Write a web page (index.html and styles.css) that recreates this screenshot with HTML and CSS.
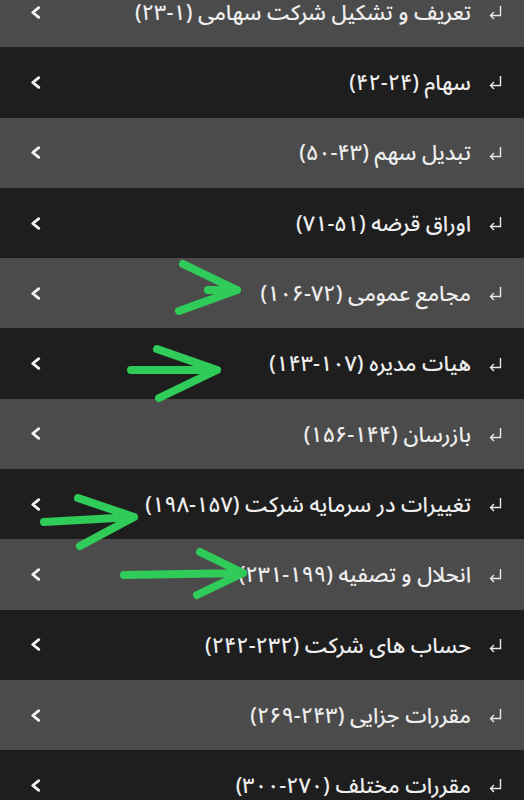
FILE: index.html
```html
<!DOCTYPE html>
<html lang="fa" dir="rtl">
<head>
<meta charset="utf-8">
<title>فهرست</title>
<link rel="stylesheet" href="styles.css">
</head>
<body>
<div class="screen">
  <ul class="list">
    <li class="row light"><svg class="ret" viewBox="0 0 14 16"><path d="M12.5 1v9.5H2.5M6 7l-3.5 3.5L6 14"/></svg><span class="label">تعریف و تشکیل شرکت سهامی (۱-۲۳)</span><svg class="chev" viewBox="0 0 10 12"><path d="M8 1.5L2.5 6L8 10.5"/></svg></li>
    <li class="row dark"><svg class="ret" viewBox="0 0 14 16"><path d="M12.5 1v9.5H2.5M6 7l-3.5 3.5L6 14"/></svg><span class="label">سهام (۲۴-۴۲)</span><svg class="chev" viewBox="0 0 10 12"><path d="M8 1.5L2.5 6L8 10.5"/></svg></li>
    <li class="row light"><svg class="ret" viewBox="0 0 14 16"><path d="M12.5 1v9.5H2.5M6 7l-3.5 3.5L6 14"/></svg><span class="label">تبدیل سهم (۴۳-۵۰)</span><svg class="chev" viewBox="0 0 10 12"><path d="M8 1.5L2.5 6L8 10.5"/></svg></li>
    <li class="row dark"><svg class="ret" viewBox="0 0 14 16"><path d="M12.5 1v9.5H2.5M6 7l-3.5 3.5L6 14"/></svg><span class="label">اوراق قرضه (۵۱-۷۱)</span><svg class="chev" viewBox="0 0 10 12"><path d="M8 1.5L2.5 6L8 10.5"/></svg></li>
    <li class="row light"><svg class="ret" viewBox="0 0 14 16"><path d="M12.5 1v9.5H2.5M6 7l-3.5 3.5L6 14"/></svg><span class="label">مجامع عمومی (۷۲-۱۰۶)</span><svg class="chev" viewBox="0 0 10 12"><path d="M8 1.5L2.5 6L8 10.5"/></svg></li>
    <li class="row dark"><svg class="ret" viewBox="0 0 14 16"><path d="M12.5 1v9.5H2.5M6 7l-3.5 3.5L6 14"/></svg><span class="label">هیات مدیره (۱۰۷-۱۴۳)</span><svg class="chev" viewBox="0 0 10 12"><path d="M8 1.5L2.5 6L8 10.5"/></svg></li>
    <li class="row light"><svg class="ret" viewBox="0 0 14 16"><path d="M12.5 1v9.5H2.5M6 7l-3.5 3.5L6 14"/></svg><span class="label">بازرسان (۱۴۴-۱۵۶)</span><svg class="chev" viewBox="0 0 10 12"><path d="M8 1.5L2.5 6L8 10.5"/></svg></li>
    <li class="row dark"><svg class="ret" viewBox="0 0 14 16"><path d="M12.5 1v9.5H2.5M6 7l-3.5 3.5L6 14"/></svg><span class="label">تغییرات در سرمایه شرکت (۱۵۷-۱۹۸)</span><svg class="chev" viewBox="0 0 10 12"><path d="M8 1.5L2.5 6L8 10.5"/></svg></li>
    <li class="row light"><svg class="ret" viewBox="0 0 14 16"><path d="M12.5 1v9.5H2.5M6 7l-3.5 3.5L6 14"/></svg><span class="label">انحلال و تصفیه (۱۹۹-۲۳۱)</span><svg class="chev" viewBox="0 0 10 12"><path d="M8 1.5L2.5 6L8 10.5"/></svg></li>
    <li class="row dark"><svg class="ret" viewBox="0 0 14 16"><path d="M12.5 1v9.5H2.5M6 7l-3.5 3.5L6 14"/></svg><span class="label">حساب های شرکت (۲۳۲-۲۴۲)</span><svg class="chev" viewBox="0 0 10 12"><path d="M8 1.5L2.5 6L8 10.5"/></svg></li>
    <li class="row light"><svg class="ret" viewBox="0 0 14 16"><path d="M12.5 1v9.5H2.5M6 7l-3.5 3.5L6 14"/></svg><span class="label">مقررات جزایی (۲۴۳-۲۶۹)</span><svg class="chev" viewBox="0 0 10 12"><path d="M8 1.5L2.5 6L8 10.5"/></svg></li>
    <li class="row dark"><svg class="ret" viewBox="0 0 14 16"><path d="M12.5 1v9.5H2.5M6 7l-3.5 3.5L6 14"/></svg><span class="label">مقررات مختلف (۲۷۰-۳۰۰)</span><svg class="chev" viewBox="0 0 10 12"><path d="M8 1.5L2.5 6L8 10.5"/></svg></li>
  </ul>
  <svg class="marks" viewBox="0 0 524 800" aria-hidden="true">
    <path d="M183 264L237 290L179 311M208 290H237"/>
    <path d="M131 370H217M157 349L217 370L159 398"/>
    <path d="M44 522L134 517M78 498L134 517L80 546"/>
    <path d="M124 575L243 573M200 552L243 573L197 595"/>
  </svg>
</div>
</body>
</html>
```
FILE: styles.css
```css
html, body {
  margin: 0;
  padding: 0;
  background: #1e1e1e;
}
body {
  width: 524px;
  height: 800px;
  overflow: hidden;
  font-family: "Noto Sans Arabic", "Vazirmatn", "DejaVu Sans", sans-serif;
}
.screen {
  position: relative;
  width: 524px;
  height: 800px;
  overflow: hidden;
}
.list {
  list-style: none;
  margin: -23px 0 0;
  padding: 0;
}
.row {
  height: 70.3px;
  display: flex;
  flex-direction: row;
  align-items: center;
  padding: 0 22px 0 30px;
  box-sizing: border-box;
  color: #eeeeee;
}
.row.light { background: #4b4b4b; }
.row.dark { background: #1e1e1e; }
.ret {
  width: 14px;
  height: 16px;
  flex: none;
  margin-left: 17px;
  margin-top: 2px;
  fill: none;
  stroke: #e8e8e8;
  stroke-width: 1.4;
}
.label {
  font-size: 21.5px;
  font-weight: 500;
  line-height: 1;
  padding-top: 3px;
  white-space: nowrap;
}
.chev {
  width: 11px;
  height: 13px;
  flex: none;
  margin-right: auto;
  fill: none;
  stroke: #f2f2f2;
  stroke-width: 2.6;
  stroke-linecap: round;
  stroke-linejoin: round;
}
.marks {
  position: absolute;
  left: 0;
  top: 0;
  width: 524px;
  height: 800px;
  pointer-events: none;
  fill: none;
  stroke: #2fcc5a;
  stroke-width: 8;
  stroke-linecap: round;
  stroke-linejoin: round;
}
```
